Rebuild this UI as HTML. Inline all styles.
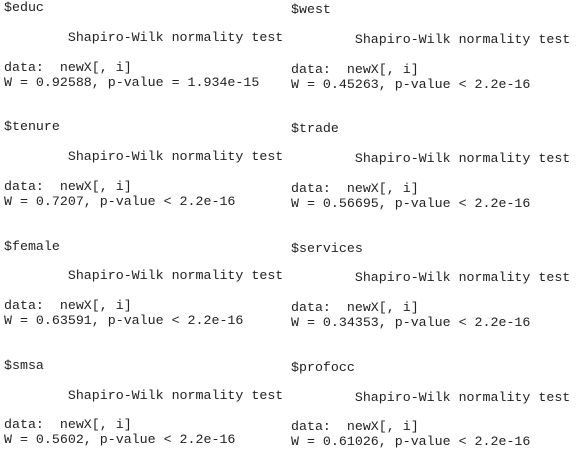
<!DOCTYPE html>
<html><head><style>
html,body{margin:0;padding:0;background:#fff;width:587px;height:458px;overflow:hidden}
pre{position:absolute;margin:0;font-family:"Liberation Mono",monospace;font-size:13.3px;line-height:14.9px;color:#222}
</style></head><body>
<pre style="left:4px;top:1px">$educ

        Shapiro-Wilk normality test

data:  newX[, i]
W = 0.92588, p-value = 1.934e-15


$tenure

        Shapiro-Wilk normality test

data:  newX[, i]
W = 0.7207, p-value &lt; 2.2e-16


$female

        Shapiro-Wilk normality test

data:  newX[, i]
W = 0.63591, p-value &lt; 2.2e-16


$smsa

        Shapiro-Wilk normality test

data:  newX[, i]
W = 0.5602, p-value &lt; 2.2e-16</pre>
<pre style="left:291px;top:3px">$west

        Shapiro-Wilk normality test

data:  newX[, i]
W = 0.45263, p-value &lt; 2.2e-16


$trade

        Shapiro-Wilk normality test

data:  newX[, i]
W = 0.56695, p-value &lt; 2.2e-16


$services

        Shapiro-Wilk normality test

data:  newX[, i]
W = 0.34353, p-value &lt; 2.2e-16


$profocc

        Shapiro-Wilk normality test

data:  newX[, i]
W = 0.61026, p-value &lt; 2.2e-16</pre>
</body></html>
